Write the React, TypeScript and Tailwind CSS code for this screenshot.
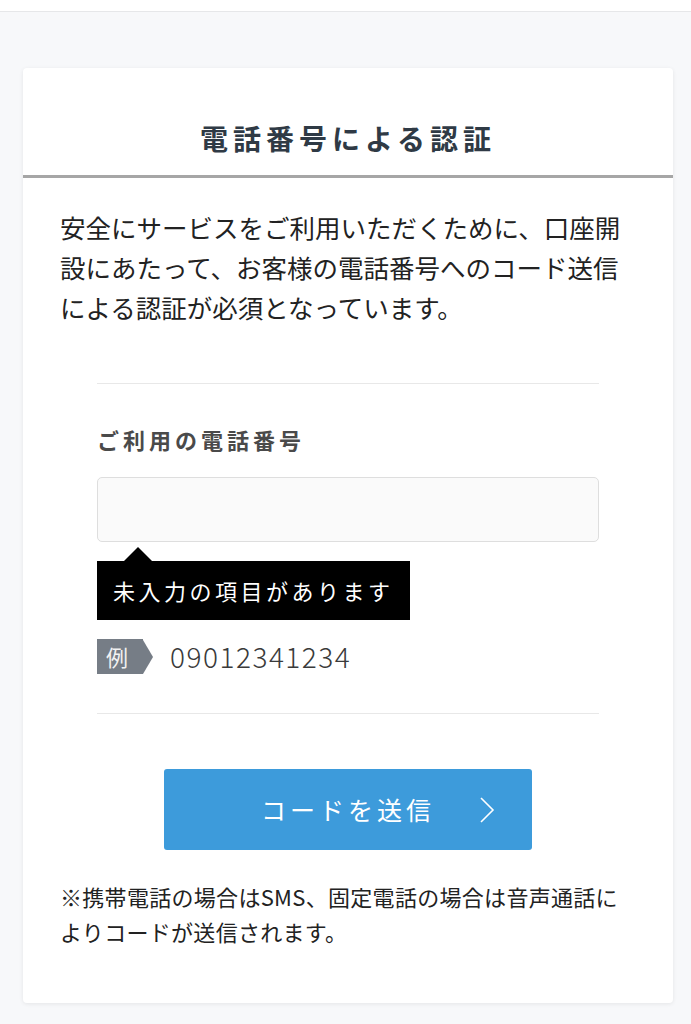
import React from 'react';

const font = "font-['Noto_Sans_CJK_JP','Noto_Sans',sans-serif]";

const App: React.FC = () => {
  return (
    <div className={`min-h-screen bg-[#f7f8fa] ${font}`}>
      <div className="h-[12px] bg-white border-b border-[#e6e7e9]" />

      <div className="ml-[23px] w-[650px] mt-[56px] bg-white rounded-[4px] shadow-[0_1px_4px_rgba(0,0,0,0.08)]">
        <div className="pt-[50px] pb-[17px] border-b-[3px] border-[#a6a6a6] text-center">
          <h1 className="text-[28px] leading-[40px] font-bold tracking-[5px] text-[#2f3a45]">電話番号による認証</h1>
        </div>

        <div className="px-[37px] pt-[29px] pb-[54px]">
          <p className="text-[25.5px] leading-[40px] text-[#222]">
            安全にサービスをご利用いただくために、口座開設にあたって、お客様の電話番号へのコード送信による認証が必須となっています。
          </p>

          <div className="mx-[37px] mt-[56px] border-t border-[#e8e8e8]">
            <div className="pt-[39px] text-[22px] leading-[32px] font-bold tracking-[4px] text-[#4a4a4a]">ご利用の電話番号</div>

            <input
              type="tel"
              className="mt-[22px] block w-full h-[65px] rounded-[5px] border border-[#dedede] bg-[#fafafa] px-3 text-[22px] outline-none"
            />

            <div className="mt-[5px] flex flex-col items-start">
              <div className="ml-[27px] w-0 h-0 border-l-[14px] border-r-[14px] border-b-[14px] border-l-transparent border-r-transparent border-b-black" />
              <div className="bg-black text-white text-[22px] leading-[59px] tracking-[3.5px] pl-[16px] pr-[16px]">未入力の項目があります</div>
            </div>

            <div className="mt-[19px] flex items-center">
              <div className="flex items-center">
                <div className="h-[35px] w-[46px] bg-[#767d86] text-[#f2f2f2] text-[22px] leading-[35px] pl-[9px]">例</div>
                <div className="w-0 h-0 border-t-[17.5px] border-b-[17.5px] border-l-[10px] border-t-transparent border-b-transparent border-l-[#767d86]" />
              </div>
              <span className="ml-[17px] text-[28px] leading-[35px] text-[#3a3a3a] font-light tracking-[1.5px]">09012341234</span>
            </div>

            <div className="mt-[39px] border-t border-[#e8e8e8]" />
          </div>

          <div className="mt-[55px] flex justify-center">
            <button className="relative w-[368px] h-[81px] rounded-[3px] bg-[#3d9bdb] text-white text-[25px] tracking-[4px] flex items-center justify-center">
              <span>コードを送信</span>
              <svg className="absolute left-[315px] top-[27px]" width="16" height="28" viewBox="0 0 16 28" fill="none" stroke="white" strokeWidth="1.6">
                <path d="M2 2 L14 14 L2 26" />
              </svg>
            </button>
          </div>

          <p className="mt-[29px] text-[22px] leading-[35px] tracking-[0.3px] text-[#222]">
            ※携帯電話の場合はSMS、固定電話の場合は音声通話によりコードが送信されます。
          </p>
        </div>
      </div>
    </div>
  );
};

export default App;
